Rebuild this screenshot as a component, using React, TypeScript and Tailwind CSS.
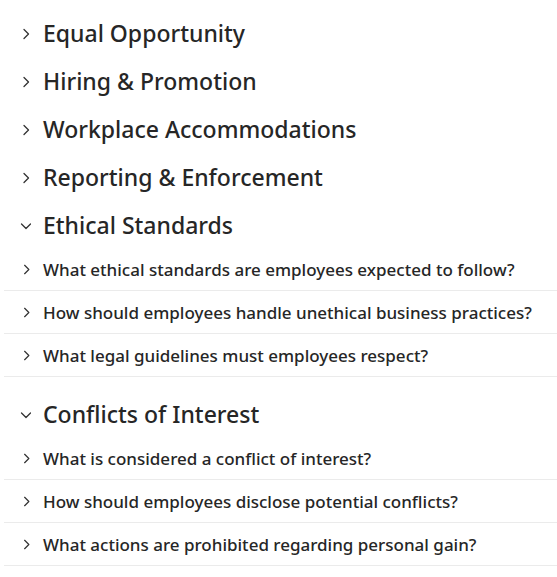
import React from 'react';

type Section = {
  title: string;
  open: boolean;
  items: string[];
};

const sections: Section[] = [
  { title: 'Equal Opportunity', open: false, items: [] },
  { title: 'Hiring & Promotion', open: false, items: [] },
  { title: 'Workplace Accommodations', open: false, items: [] },
  { title: 'Reporting & Enforcement', open: false, items: [] },
  {
    title: 'Ethical Standards',
    open: true,
    items: [
      'What ethical standards are employees expected to follow?',
      'How should employees handle unethical business practices?',
      'What legal guidelines must employees respect?',
    ],
  },
  {
    title: 'Conflicts of Interest',
    open: true,
    items: [
      'What is considered a conflict of interest?',
      'How should employees disclose potential conflicts?',
      'What actions are prohibited regarding personal gain?',
    ],
  },
];

const Chevron = ({ open, size }: { open: boolean; size: number }) => (
  <svg
    width={size}
    height={size}
    viewBox="0 0 16 16"
    fill="none"
    stroke="#333"
    strokeWidth={1.3}
    strokeLinecap="round"
    strokeLinejoin="round"
    className={open ? 'rotate-90' : ''}
  >
    <path d="M6 3.5 10.5 8 6 12.5" />
  </svg>
);

export default function App() {
  return (
    <div className="bg-white w-[557px] pt-[8px] text-[#262626] font-['Noto_Sans',sans-serif]">
      {sections.map((s) => (
        <div key={s.title} className={s.open && s.items.length ? 'mb-[12px]' : ''}>
          <div className="h-12 flex items-center pl-[18px] pt-[3px]">
            <span className="w-[25px] flex items-center">
              <Chevron open={s.open} size={16} />
            </span>
            <span className="text-[23px] font-medium leading-none">{s.title}</span>
          </div>
          {s.open &&
            s.items.map((q) => (
              <div
                key={q}
                className="h-[43px] ml-[4px] border-b border-[#ebebeb] flex items-center pl-[15px]"
              >
                <span className="w-[24px] flex items-center">
                  <Chevron open={false} size={15} />
                </span>
                <span className="text-[17px] font-medium leading-none">{q}</span>
              </div>
            ))}
        </div>
      ))}
    </div>
  );
}
